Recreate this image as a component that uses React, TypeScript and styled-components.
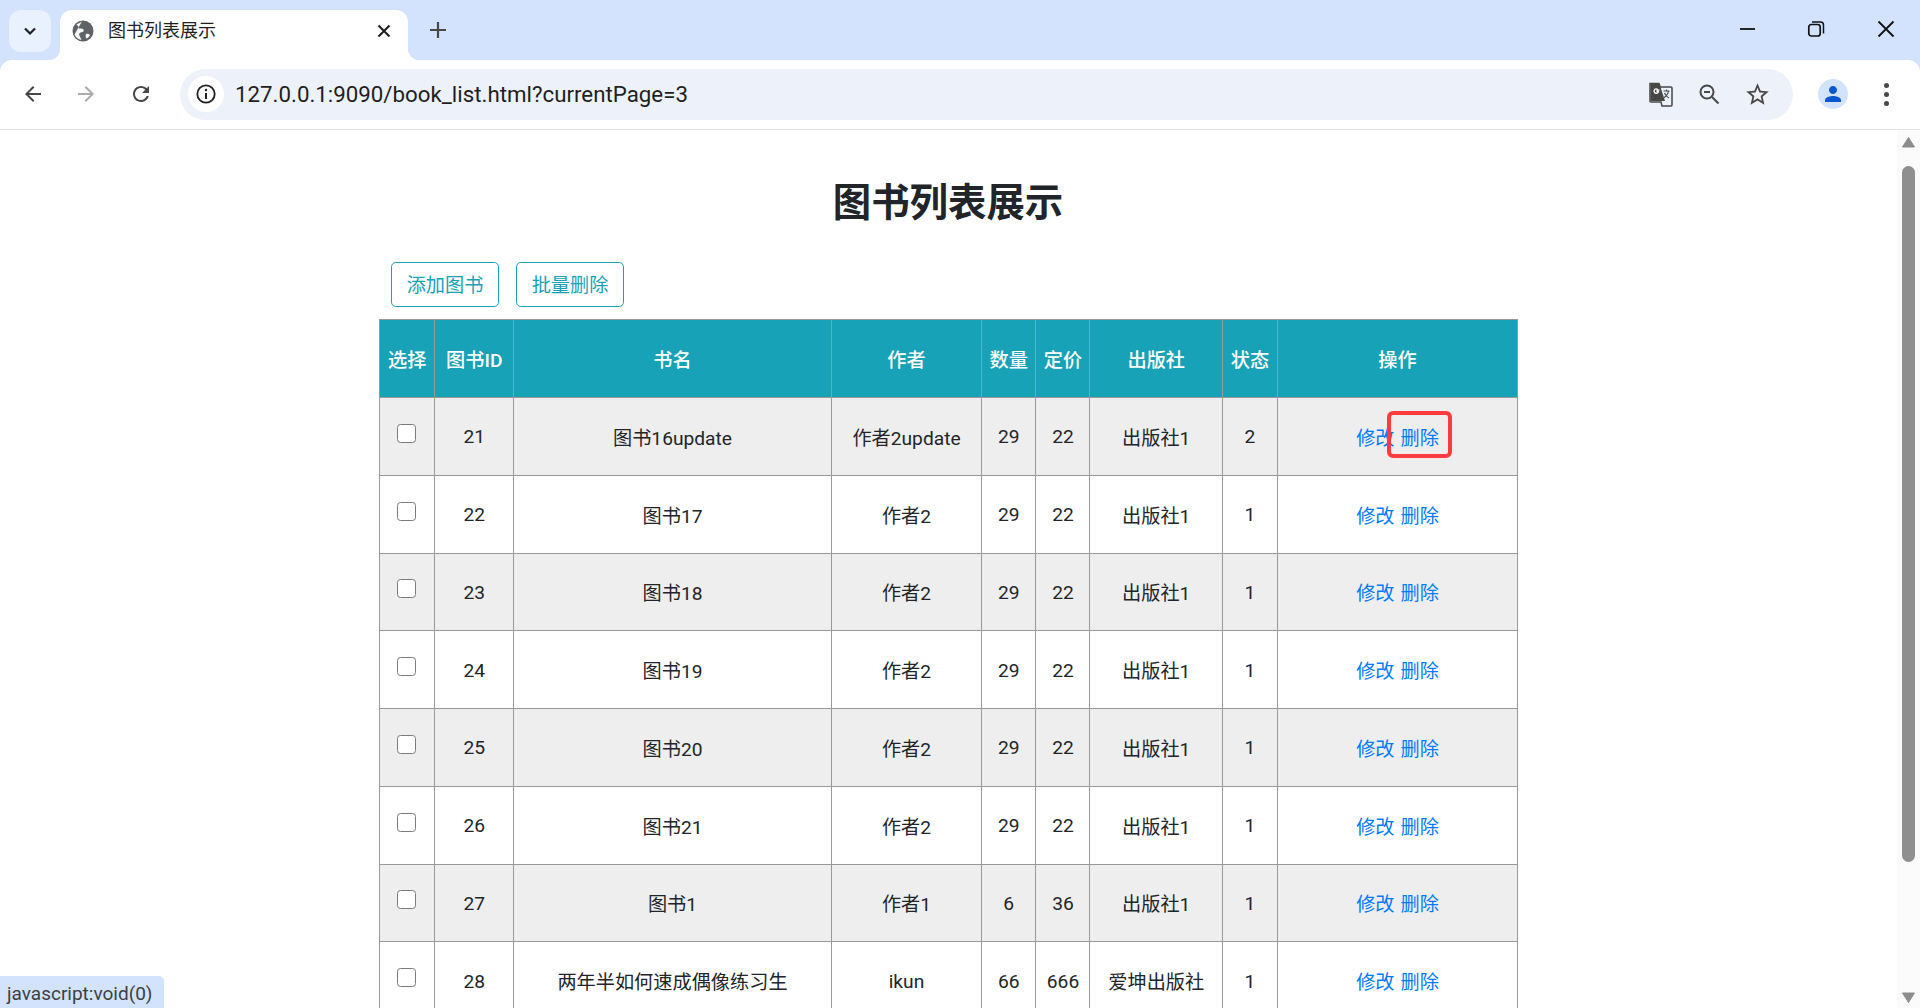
import React from "react";
import styled, { createGlobalStyle } from "styled-components";

const Global = createGlobalStyle`
  html, body { margin: 0; padding: 0; height: 100%; overflow: hidden; background: #fff; }
  * { box-sizing: border-box; }
  #root { height: 1008px; }
`;

const UI = `Roboto, "Noto Sans CJK SC", sans-serif`;
const PAGE = `Roboto, "Noto Sans CJK SC", sans-serif`;

const Frame = styled.div`
  position: relative;
  width: 1920px;
  height: 1008px;
  display: flex;
  flex-direction: column;
  background: #d3e3fd;
  overflow: hidden;
  font-family: ${UI};
`;
const TabStrip = styled.div`
  height: 60px;
  display: flex;
  align-items: flex-start;
  padding: 10px 0 0 9px;
  flex: none;
`;
const TabMenu = styled.div`
  width: 42px;
  height: 42px;
  border-radius: 12px;
  background: #e9f1fe;
  display: flex;
  align-items: center;
  justify-content: center;
  margin-right: 9px;
  flex: none;
`;
const Tab = styled.div`
  position: relative;
  width: 348px;
  height: 50px;
  background: #fff;
  border-radius: 12px 12px 0 0;
  display: flex;
  align-items: center;
  padding: 0 16px 8px 12px;
  flex: none;
  &::before, &::after {
    content: "";
    position: absolute;
    bottom: 0;
    width: 12px;
    height: 12px;
  }
  &::before { left: -12px; background: radial-gradient(circle at 0 0, transparent 12px, #fff 12.5px); }
  &::after { right: -12px; background: radial-gradient(circle at 100% 0, transparent 12px, #fff 12.5px); }
`;
const TabTitle = styled.span`
  margin-left: 14px;
  flex: 1;
  font-size: 18px;
  line-height: 22px;
  color: #1f1f1f;
  white-space: nowrap;
  padding-bottom: 1px;
`;
const NewTab = styled.div`
  width: 24px;
  height: 24px;
  margin: 8px 0 0 18px;
  display: flex;
  flex: none;
`;
const WindowControls = styled.div`
  margin-left: auto;
  display: flex;
  align-items: center;
  height: 40px;
  margin-top: -1px;
  padding-right: 22px;
  gap: 46px;
`;
const MinimizeSlot = styled.span`
  display: flex;
  margin-right: -1px;
  padding-left: 1px;
`;
const Toolbar = styled.div`
  height: 70px;
  flex: none;
  background: #fff;
  border-radius: 12px 12px 0 0;
  border-bottom: 1px solid #e2e2e2;
  display: flex;
  align-items: center;
  padding: 0 21px 1px 21px;
`;
const NavButton = styled.div<{ $gap?: number }>`
  width: 24px;
  height: 24px;
  flex: none;
  margin-right: ${(p) => p.$gap ?? 0}px;
  display: flex;
`;
const Omnibox = styled.div`
  width: 1613px;
  height: 51px;
  border-radius: 26px;
  background: #ecf1fa;
  display: flex;
  align-items: center;
  padding: 0 22px 0 8px;
  flex: none;
`;
const InfoBadge = styled.div`
  width: 36px;
  height: 36px;
  border-radius: 50%;
  background: #fff;
  display: flex;
  align-items: center;
  justify-content: center;
  flex: none;
`;
const Url = styled.span`
  margin-left: 11px;
  flex: 1;
  font-size: 22.3px;
  color: #1f1f1f;
  white-space: nowrap;
`;
const OmniIcons = styled.div`
  display: flex;
  align-items: center;
  gap: 23px;
`;
const Avatar = styled.div`
  width: 30px;
  height: 30px;
  border-radius: 50%;
  background: #d3e3fd;
  margin-left: 25px;
  display: flex;
  align-items: center;
  justify-content: center;
  flex: none;
`;
const Kebab = styled.div`
  width: 6px;
  margin-left: 36px;
  display: flex;
  flex-direction: column;
  gap: 4px;
  flex: none;
`;
const Dot = styled.span`
  width: 5px;
  height: 5px;
  border-radius: 50%;
  background: #474747;
`;

const Viewport = styled.div`
  flex: 1;
  display: flex;
  min-height: 0;
  background: #fff;
`;
const Page = styled.main`
  flex: 1;
  min-width: 0;
  overflow: hidden;
  font-family: ${PAGE};
  font-size: 19.2px;
  color: #212529;
`;
const Inner = styled.div`
  width: 1138px;
  margin-left: 378.5px;
  padding-top: 45px;
`;
const Title = styled.h1`
  margin: 0;
  padding-left: 1px;
  text-align: center;
  font-size: 38.4px;
  line-height: 56px;
  font-weight: 700;
  color: #212529;
`;
const Actions = styled.div`
  display: flex;
  gap: 17px;
  padding: 31px 0 0 12px;
  height: 88px;
`;
const OutlineButton = styled.button`
  width: 108px;
  height: 45px;
  border: 1px solid #17a2b8;
  border-radius: 4.8px;
  background: #fff;
  color: #17a2b8;
  font: inherit;
  padding: 2px 0 0 1px;
  line-height: 1;
`;
const Table = styled.table`
  width: 1138px;
  table-layout: fixed;
  border-collapse: collapse;
  text-align: center;
`;
const Col = styled.col<{ $w: number }>`
  width: ${(p) => p.$w}px;
`;
const HeadCell = styled.th`
  height: 78px;
  background: #17a2b8;
  color: #fff;
  font-weight: 500;
  border: 1px solid #999;
  padding: 0 0 0 1px;
`;
const Row = styled.tr<{ $odd: boolean }>`
  background: ${(p) => (p.$odd ? "#eee" : "#fff")};
`;
const Cell = styled.td`
  height: 77.76px;
  border: 1px solid #999;
  padding: 1px 0 0 1px;
  white-space: nowrap;
`;
const CheckCell = styled(Cell)`
  padding: 0 0 6px;
`;
const Check = styled.input.attrs({ type: "checkbox" })`
  appearance: none;
  display: block;
  width: 19px;
  height: 19px;
  margin: 0 auto 0 17px;
  border: 1.5px solid #7b7b7b;
  border-radius: 3.5px;
  background: #fff;
`;
const OpLink = styled.a`
  color: #007bff;
  text-decoration: none;
  margin: 0 3px;
`;
const Highlight = styled.div`
  position: absolute;
  left: 1387px;
  top: 411px;
  width: 65px;
  height: 47px;
  border: 4px solid #ff3b3f;
  border-radius: 6px;
  pointer-events: none;
`;
const Status = styled.div`
  position: absolute;
  left: 0;
  bottom: 0;
  width: 164px;
  height: 32px;
  background: #d3e3fd;
  border-top-right-radius: 5px;
  padding: 2px 0 0 7px;
  font-size: 19px;
  line-height: 32px;
  color: #3c4043;
  white-space: nowrap;
`;
const Scrollbar = styled.div`
  width: 23px;
  flex: none;
  background: #fbfbfb;
  display: flex;
  flex-direction: column;
  align-items: center;
  padding-top: 7px;
`;
const Thumb = styled.div`
  width: 13px;
  height: 696px;
  margin: 18px 0 130px;
  border-radius: 7px;
  background: #8f8f8f;
  flex: none;
`;

const Arrow = ({ down }: { down?: boolean }) => (
  <svg width="15" height="11" viewBox="0 0 15 11" style={{ flex: "none" }}>
    <path
      d={down ? "M1.5 1h12L7.5 10.5z" : "M7.5.5l6 9.5h-12z"}
      fill="#8c8c8c"
      stroke="#8c8c8c"
      strokeLinejoin="round"
    />
  </svg>
);

const columns = [55.5, 78.5, 318, 150, 54.5, 54, 132.5, 55, 240];
const headers = ["选择", "图书ID", "书名", "作者", "数量", "定价", "出版社", "状态", "操作"];
const rows = [
  [21, "图书16update", "作者2update", 29, 22, "出版社1", 2],
  [22, "图书17", "作者2", 29, 22, "出版社1", 1],
  [23, "图书18", "作者2", 29, 22, "出版社1", 1],
  [24, "图书19", "作者2", 29, 22, "出版社1", 1],
  [25, "图书20", "作者2", 29, 22, "出版社1", 1],
  [26, "图书21", "作者2", 29, 22, "出版社1", 1],
  [27, "图书1", "作者1", 6, 36, "出版社1", 1],
  [28, "两年半如何速成偶像练习生", "ikun", 66, 666, "爱坤出版社", 1],
];

const M = ({ d, fill = "#474747", size = 24 }: { d: string; fill?: string; size?: number }) => (
  <svg width={size} height={size} viewBox="0 0 24 24" style={{ flex: "none" }}>
    <path d={d} fill={fill} />
  </svg>
);

export default function App() {
  return (
    <Frame>
      <Global />
      <TabStrip>
        <TabMenu>
          <svg width="16" height="16" viewBox="0 0 16 16">
            <path d="M3 5.500l5 5 5-5" fill="none" stroke="#1f1f1f" strokeWidth="2.200" />
          </svg>
        </TabMenu>
        <Tab>
          <svg width="22" height="22" viewBox="0 0 22 22" style={{ flex: "none" }}>
            <circle cx="11" cy="11" r="10.500" fill="#5f6368" />
            <path
              d="M10 1.500C8 3 6 3.500 4.500 4.500 6 6 7 7 7 8.500c1.500 0 3-.5 4 .5s1 2.500-.5 3c-2 .5-3 .5-3.500 2.500L9.500 20c-3.500-.5-6-3-7-5.500M14 14c1.500-.5 3 0 4 1-.8 1.600-2.200 3-3.500 3.600-.8-1-1.200-3.200-.5-4.600z"
              fill="#fff"
              opacity="0.95"
            />
          </svg>
          <TabTitle>图书列表展示</TabTitle>
          <svg width="16" height="16" viewBox="0 0 16 16" style={{ flex: "none" }}>
            <path d="M2.500 2.500l11 11M13.500 2.500l-11 11" stroke="#1f1f1f" strokeWidth="2.100" />
          </svg>
        </Tab>
        <NewTab>
          <svg width="24" height="24" viewBox="0 0 24 24">
            <path d="M12 4v16M4 12h16" stroke="#474747" strokeWidth="2.200" />
          </svg>
        </NewTab>
        <WindowControls>
          <MinimizeSlot>
            <svg width="24" height="24" viewBox="0 0 24 24">
              <path d="M5 12h15" stroke="#111" strokeWidth="1.800" />
            </svg>
          </MinimizeSlot>
          <svg width="24" height="24" viewBox="0 0 24 24">
            <rect x="4.800" y="7.500" width="11.400" height="11.500" rx="2.500" fill="none" stroke="#111" strokeWidth="1.700" />
            <path d="M8 5h8.500A3 3 0 0 1 19.500 8v8.500" fill="none" stroke="#111" strokeWidth="1.500" />
          </svg>
          <svg width="24" height="24" viewBox="0 0 24 24">
            <path d="M4.500 4.500l15 15M19.500 4.500l-15 15" stroke="#111" strokeWidth="1.800" />
          </svg>
        </WindowControls>
      </TabStrip>
      <Toolbar>
        <NavButton $gap={29}>
          <M d="M20 11H7.830l5.590-5.590L12 4l-8 8 8 8 1.410-1.410L7.830 13H20v-2z" />
        </NavButton>
        <NavButton $gap={31}>
          <M fill="#acacac" d="M4 11h12.170l-5.590-5.590L12 4l8 8-8 8-1.410-1.410L16.170 13H4v-2z" />
        </NavButton>
        <NavButton $gap={27}>
          <M d="M17.650 6.350C16.200 4.900 14.210 4 12 4c-4.420 0-7.990 3.580-7.990 8s3.570 8 7.990 8c3.730 0 6.840-2.550 7.730-6h-2.080c-.82 2.330-3.040 4-5.650 4-3.310 0-6-2.690-6-6s2.690-6 6-6c1.660 0 3.140.69 4.220 1.780L13 11h7V4l-2.350 2.350z" />
        </NavButton>
        <Omnibox>
          <InfoBadge>
            <svg width="22" height="22" viewBox="0 0 22 22">
              <circle cx="11" cy="11" r="8.700" fill="none" stroke="#1f1f1f" strokeWidth="1.800" />
              <path d="M11 10v6" stroke="#1f1f1f" strokeWidth="2" />
              <circle cx="11" cy="7" r="1.200" fill="#1f1f1f" />
            </svg>
          </InfoBadge>
          <Url>127.0.0.1:9090/book_list.html?currentPage=3</Url>
          <OmniIcons>
            <svg width="26" height="26" viewBox="0 0 26 26">
              <path d="M2 2.500h9l1.200 3.500H23a1 1 0 0 1 1 1v17a1 1 0 0 1-1 1H14l-1-4H3a1 1 0 0 1-1-1z" fill="none" stroke="#474747" strokeWidth="1.500" />
              <path d="M2.500 3h9l5.500 17H3a1 1 0 0 1-.5-1z" fill="#474747" />
              <path d="M11.500 9.200H9.100v1.500h1.300a2.200 2.200 0 1 1-.7-2.300" fill="none" stroke="#fff" strokeWidth="1.300" />
              <path d="M15.500 10h6M18.500 8.500V10M20.500 10c-.6 3-2.500 5.500-5 7M16.500 12c.8 2 2.500 4 4.500 5" fill="none" stroke="#474747" strokeWidth="1.200" />
            </svg>
            <svg width="24" height="24" viewBox="0 0 24 24">
              <circle cx="10" cy="10" r="6.500" fill="none" stroke="#474747" strokeWidth="2" />
              <path d="M15 15l6.500 6.500" stroke="#474747" strokeWidth="2" />
              <path d="M7 10h6" stroke="#474747" strokeWidth="2" />
            </svg>
            <M size={27} d="M22 9.240l-7.190-.62L12 2 9.190 8.630 2 9.240l5.460 4.730L5.820 21 12 17.270 18.180 21l-1.630-7.030L22 9.240zM12 15.400l-3.760 2.270 1-4.280-3.320-2.880 4.380-.38L12 6.100l1.710 4.040 4.380.38-3.320 2.880 1 4.280L12 15.400z" />
          </OmniIcons>
        </Omnibox>
        <Avatar>
          <M size={24} fill="#0b57d0" d="M12 12c2.210 0 4-1.790 4-4s-1.790-4-4-4-4 1.790-4 4 1.790 4 4 4zm0 2c-2.670 0-8 1.340-8 4v2h16v-2c0-2.660-5.330-4-8-4z" />
        </Avatar>
        <Kebab>
          <Dot />
          <Dot />
          <Dot />
        </Kebab>
      </Toolbar>
      <Viewport>
        <Page>
          <Inner>
            <Title>图书列表展示</Title>
            <Actions>
              <OutlineButton>添加图书</OutlineButton>
              <OutlineButton>批量删除</OutlineButton>
            </Actions>
            <Table>
              <colgroup>
                {columns.map((w, i) => (
                  <Col key={i} $w={w} />
                ))}
              </colgroup>
              <thead>
                <tr>
                  {headers.map((h) => (
                    <HeadCell key={h}>{h}</HeadCell>
                  ))}
                </tr>
              </thead>
              <tbody>
                {rows.map((r, i) => (
                  <Row key={i} $odd={i % 2 === 0}>
                    <CheckCell>
                      <Check />
                    </CheckCell>
                    {r.map((v, j) => (
                      <Cell key={j}>{v}</Cell>
                    ))}
                    <Cell>
                      <OpLink href="#">修改</OpLink>
                      <OpLink href="#">删除</OpLink>
                    </Cell>
                  </Row>
                ))}
              </tbody>
            </Table>
          </Inner>
        </Page>
        <Scrollbar>
          <Arrow />
          <Thumb />
          <Arrow down />
        </Scrollbar>
      </Viewport>
      <Highlight />
      <Status>javascript:void(0)</Status>
    </Frame>
  );
}
